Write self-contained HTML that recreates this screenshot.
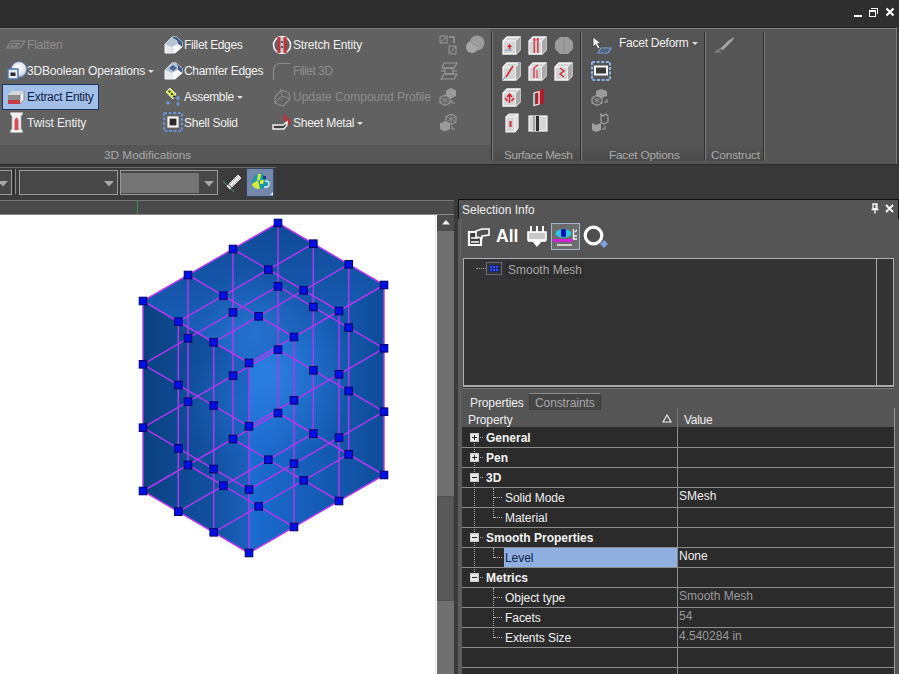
<!DOCTYPE html>
<html><head><meta charset="utf-8">
<style>
*{margin:0;padding:0;box-sizing:border-box}
html,body{width:899px;height:674px;overflow:hidden;background:#383838;font-family:"Liberation Sans",sans-serif;font-size:12px;color:#e6e6e6}
.a{position:absolute}
.t{position:absolute;white-space:nowrap;line-height:1}
#title{left:0;top:0;width:899px;height:27px;background:#2e2e2e}
#ribbon{left:0;top:27px;width:897px;height:137px;background:#555555;border-top:1px solid #242424;border-right:1px solid #7a7a7a}
.band{position:absolute;top:117px;height:16px;background:linear-gradient(#545454,#4b4b4b)}
.sep{position:absolute;top:4px;width:2px;height:128px;border-left:1px solid #2e2e2e;border-right:1px solid #7a7a7a}
.rl{font-size:12px;color:#f0f0f0}
.dis{color:#8e8e8e}
.plab{font-size:11.8px;color:#a9a9a9}
.arr{display:inline-block;width:0;height:0;border-left:3px solid transparent;border-right:3px solid transparent;border-top:3px solid #e0e0e0;vertical-align:middle;margin-left:3px}
</style></head><body>
<div id="title" class="a"></div>
<!-- window controls -->
<div class="a" style="left:854px;top:15px;width:8px;height:2px;background:#fff"></div>
<div class="a" style="left:871px;top:8px;width:7px;height:6px;border:1.5px solid #fff;border-bottom:none;border-left:none"></div>
<div class="a" style="left:869px;top:10px;width:7px;height:7px;border:1.5px solid #fff;border-top-width:2px"></div>
<svg class="a" style="left:885px;top:7px" width="10" height="10"><path d="M1.5 1.5L8.5 8.5M8.5 1.5L1.5 8.5" stroke="#fff" stroke-width="2.2"/></svg>

<div id="ribbon" class="a">
  <div class="a" style="left:0;top:1px;width:491px;height:117px;background:#616161"></div>
  <div class="a" style="left:0;top:117px;width:491px;height:19px;background:#565656"></div>
  <div class="band" style="left:494px;width:86px"></div>
  <div class="band" style="left:583px;width:121px"></div>
  <div class="band" style="left:707px;width:56px"></div>
  <div class="sep" style="left:491px"></div>
  <div class="sep" style="left:580px"></div>
  <div class="sep" style="left:704px"></div>
  <div class="sep" style="left:763px"></div>
  <div class="t plab" style="left:104px;top:122px">3D Modifications</div>
  <div class="t plab" style="left:504px;top:122px;letter-spacing:-0.35px">Surface Mesh</div>
  <div class="t plab" style="left:609px;top:122px;letter-spacing:-0.22px">Facet Options</div>
  <div class="t plab" style="left:711px;top:122px;letter-spacing:-0.17px">Construct</div>
</div>
<div class="a" style="left:0;top:28px;width:897px;height:1px;background:#808080"></div>
<!-- RIBBON ITEMS -->
<div class="a" style="left:2px;top:84px;width:97px;height:26px;background:#a2bfe8;border:1px solid #1d3460"></div>

<!-- ICONS col1 -->
<svg class="a" style="left:6px;top:40px" width="20" height="9"><path d="M5.5 1H19L14 8H1Z" fill="none" stroke="#8e8e8e" stroke-width="1.1"/><path d="M7 3.5H14L11 6.5H5Z" fill="none" stroke="#8e8e8e" stroke-width="0.9"/><path d="M11 3.5L9.5 6.5" stroke="#8e8e8e" stroke-width="0.9"/></svg>
<svg class="a" style="left:7px;top:61px" width="20" height="19"><defs><radialGradient id="bsph" cx="0.45" cy="0.4" r="0.6"><stop offset="0" stop-color="#ffffff"/><stop offset="0.7" stop-color="#dfe6ee"/><stop offset="1" stop-color="#9fb4cf"/></radialGradient></defs><circle cx="12" cy="8.5" r="7.8" fill="url(#bsph)" stroke="#5d7fb0" stroke-width="0.8"/><path d="M1 8H11V18H1Z" fill="#e9eef4" stroke="#4f73a8" stroke-width="1.4"/><rect x="3.5" y="11.5" width="5" height="3.5" fill="#2a2a2a"/></svg>
<svg class="a" style="left:7px;top:90px" width="19" height="15"><path d="M1 5H13V14H1Z" fill="#8a8a8a"/><path d="M1 10H13V14H1Z" fill="#c43c48"/><path d="M13 5L17 1V10L13 14Z" fill="#f0f0f0" stroke="#777" stroke-width="0.7"/><path d="M1 5L5 1H17L13 5Z" fill="#d8d8d8"/></svg>
<svg class="a" style="left:10px;top:112px" width="13" height="21"><path d="M0.5 0.5H12.5V2.5L11 4V17L12.5 18.5V20.5H0.5V18.5L2 17V4L0.5 2.5Z" fill="#efefef" stroke="#bbb" stroke-width="0.6"/><path d="M6.5 5L8.5 8V18H4.5V8Z" fill="#d0505c"/></svg>
<!-- col2 -->
<svg class="a" style="left:164px;top:35px" width="19" height="20"><path d="M1 9L8 2H13L18 7V12L11 18H1Z" fill="#e6eaee" stroke="#f8f8f8" stroke-width="1"/><path d="M8 2H13L18 7V12L14 9Q14 5 10 4Z" fill="#3f5d86"/><path d="M1 9L8 2L10 4Q14 5 14 9L8 12Z" fill="#b4c2d4"/><path d="M8 12L14 9L18 12L11 18Z" fill="#f6f8fa"/><path d="M1 9L8 12V18" fill="none" stroke="#c8ced6" stroke-width="0.8"/></svg>
<svg class="a" style="left:164px;top:61px" width="19" height="20"><path d="M1 9L8 2H12L18 7V12L11 18H1Z" fill="#e6eaee" stroke="#f8f8f8" stroke-width="1"/><path d="M12 2L18 7V12L14 9V6Z" fill="#3f5d86"/><path d="M1 9L8 2H12L14 6V9L8 12Z" fill="#b4c2d4"/><path d="M5 7L9 4L13 7L9 10Z" fill="#4a6690"/><path d="M8 12L14 9L18 12L11 18Z" fill="#f6f8fa"/></svg>
<svg class="a" style="left:163px;top:87px" width="20" height="20"><path d="M3 5L7 1L13 7L10 12Z" fill="#d6e84a" stroke="#f6f6f6" stroke-width="0.8"/><circle cx="6.5" cy="4.5" r="1.1" fill="#222"/><circle cx="9" cy="7" r="1.1" fill="#222"/><circle cx="11" cy="9.5" r="1.1" fill="#222"/><g fill="#7ea0d0"><circle cx="5" cy="16" r="1.8"/><circle cx="15" cy="11" r="1.8"/><circle cx="15" cy="17" r="1.5"/></g><path d="M15 9V19M13 17H17M3 16H8" stroke="#5a8ac8" stroke-width="0.8"/></svg>
<svg class="a" style="left:163px;top:112px" width="20" height="20"><rect x="1" y="1" width="18" height="18" fill="none" stroke="#8fb2e6" stroke-width="2.2" stroke-dasharray="3 1.6"/><rect x="1" y="1" width="18" height="18" fill="none" stroke="#2a4a80" stroke-width="0.6"/><rect x="5.5" y="5.5" width="9" height="9" fill="#2c2c2c" stroke="#f4f4f4" stroke-width="2.2"/></svg>
<!-- col3 -->
<svg class="a" style="left:271px;top:36px" width="22" height="18"><circle cx="11" cy="9" r="8.5" fill="none" stroke="#f2f2f2" stroke-width="1.6"/><rect x="6.5" y="1" width="3" height="16" fill="#c8303c"/><rect x="12.5" y="1" width="3" height="16" fill="#c8303c"/><rect x="9.5" y="1" width="3" height="16" fill="#c8ccd4"/><circle cx="11" cy="6" r="0.9" fill="#222"/><circle cx="11" cy="11" r="0.9" fill="#222"/></svg>
<svg class="a" style="left:272px;top:62px" width="20" height="19"><path d="M1.5 18V9Q1.5 2 8 1.5H18.5" fill="none" stroke="#8c8c8c" stroke-width="1.2"/></svg>
<svg class="a" style="left:272px;top:88px" width="20" height="19"><path d="M3 9L9 2L17 5L18 11L11 18L3 15Z" fill="none" stroke="#8a8a8a" stroke-width="1.3"/><path d="M9 2L10 8L18 11M10 8L3 15" fill="none" stroke="#8a8a8a" stroke-width="1"/><path d="M5 11L9 9V15" stroke="#7a7a7a" stroke-width="0.8" fill="none"/></svg>
<svg class="a" style="left:272px;top:112px" width="22" height="20"><path d="M12 1L20 10L16 14L11 7Z" fill="#b83440" opacity="0.85"/><path d="M1 13H11L15 10V13L12 17H1Z" fill="#404040" stroke="#f2f2f2" stroke-width="1.4"/></svg>
<!-- col4 small gray icons -->
<svg class="a" style="left:439px;top:35px" width="20" height="20"><rect x="1" y="1" width="7" height="7" fill="none" stroke="#9a9a9a" stroke-width="1"/><path d="M2 7L7 2" stroke="#9a9a9a"/><rect x="10" y="11" width="7" height="8" fill="none" stroke="#9a9a9a" stroke-width="1"/><path d="M11 18L16 12" stroke="#9a9a9a"/><path d="M10 2H15V8" fill="none" stroke="#9a9a9a" stroke-width="1.4"/></svg>
<svg class="a" style="left:465px;top:35px" width="21" height="19"><circle cx="12" cy="8" r="7.5" fill="#9c9c9c"/><circle cx="7" cy="12" r="6" fill="#a6a6a6"/><path d="M6 7L13 12" stroke="#777" stroke-width="0.8"/></svg>
<svg class="a" style="left:440px;top:62px" width="19" height="18"><path d="M4 1H17L14 6H2Z" fill="none" stroke="#9c9c9c" stroke-width="1.1"/><path d="M4 12H17L14 17H1Z" fill="none" stroke="#9c9c9c" stroke-width="1.1"/><rect x="5" y="6" width="8" height="6" fill="none" stroke="#9c9c9c" stroke-width="1"/><path d="M1 9H5M13 9H17" stroke="#9c9c9c"/></svg>
<svg class="a" style="left:439px;top:87px" width="20" height="20"><path d="M12 1L17 3.5V9L12 11.5L7 9V3.5Z" fill="#9a9a9a"/><path d="M6 8L11 10.5V16L6 18.5L1 16V10.5Z" fill="none" stroke="#9a9a9a" stroke-width="1.1"/><path d="M1 10.5L11 16M11 10.5L1 16M6 8V18.5" stroke="#9a9a9a" stroke-width="0.7"/><path d="M13 13V16H16" fill="none" stroke="#9a9a9a" stroke-width="1.1"/></svg>
<svg class="a" style="left:439px;top:113px" width="20" height="20"><path d="M12 1L17 3.5V9L12 11.5L7 9V3.5Z" fill="none" stroke="#9a9a9a" stroke-width="1.1"/><path d="M7 3.5L17 9M17 3.5L7 9M12 1V11.5" stroke="#9a9a9a" stroke-width="0.7"/><path d="M6 8L11 10.5V16L6 18.5L1 16V10.5Z" fill="#9a9a9a"/><path d="M13 13V16H16" fill="none" stroke="#9a9a9a" stroke-width="1.1"/></svg>

<div class="t rl dis" style="left:27px;top:39px;letter-spacing:-0.17px">Flatten</div>
<div class="t rl" style="left:27px;top:65px;letter-spacing:-0.17px">3DBoolean Operations<span class="arr"></span></div>
<div class="t rl" style="left:27px;top:91px;letter-spacing:-0.31px;color:#0e1f45">Extract Entity</div>
<div class="t rl" style="left:27px;top:117px;letter-spacing:-0.12px">Twist Entity</div>
<div class="t rl" style="left:184px;top:39px;letter-spacing:-0.36px">Fillet Edges</div>
<div class="t rl" style="left:184px;top:65px;letter-spacing:-0.33px">Chamfer Edges</div>
<div class="t rl" style="left:184px;top:91px;letter-spacing:-0.36px">Assemble<span class="arr"></span></div>
<div class="t rl" style="left:184px;top:117px;letter-spacing:-0.27px">Shell Solid</div>
<div class="t rl" style="left:293px;top:39px;letter-spacing:-0.17px">Stretch Entity</div>
<div class="t rl dis" style="left:293px;top:65px;letter-spacing:-0.49px">Fillet 3D</div>
<div class="t rl dis" style="left:293px;top:91px;letter-spacing:-0.01px">Update Compound Profile</div>
<div class="t rl" style="left:293px;top:117px;letter-spacing:-0.25px">Sheet Metal<span class="arr"></span></div>
<div class="t rl" style="left:619px;top:37px;letter-spacing:-0.26px">Facet Deform<span class="arr"></span></div>

<svg class="a" style="left:502px;top:36px" width="19" height="19"><path d="M1 5L5 1H18V14L14 18H1Z" fill="#d4d4d4" stroke="#f8f8f8" stroke-width="1.3"/><path d="M14 5V18M1 5H14L18 1" fill="none" stroke="#f8f8f8" stroke-width="1.2"/><path d="M14 5L18 1V14L14 18Z" fill="#a9a9a9"/><path d="M7.5 8L10 11H5Z" fill="#d02030"/><rect x="6.8" y="10" width="1.6" height="3" fill="#d02030"/><path d="M3 14L10 14" stroke="#8aa0c8" stroke-width="1.2"/></svg><svg class="a" style="left:528px;top:36px" width="19" height="19"><path d="M1 5L5 1H18V14L14 18H1Z" fill="#d4d4d4" stroke="#f8f8f8" stroke-width="1.3"/><path d="M14 5V18M1 5H14L18 1" fill="none" stroke="#f8f8f8" stroke-width="1.2"/><path d="M14 5L18 1V14L14 18Z" fill="#a9a9a9"/><rect x="5.5" y="2" width="1.6" height="15" fill="#d84050"/><rect x="9" y="2" width="1.6" height="15" fill="#d84050"/><path d="M5 4H11" stroke="#d84050"/></svg><svg class="a" style="left:554px;top:36px" width="20" height="19"><path d="M6 1H14L19 6V13L14 18H6L1 13V6Z" fill="#9c9c9c"/><path d="M10 2V17" stroke="#8a8a8a" stroke-width="1"/></svg><svg class="a" style="left:502px;top:62px" width="19" height="19"><path d="M1 5L5 1H18V14L14 18H1Z" fill="#d4d4d4" stroke="#f8f8f8" stroke-width="1.3"/><path d="M14 5V18M1 5H14L18 1" fill="none" stroke="#f8f8f8" stroke-width="1.2"/><path d="M14 5L18 1V14L14 18Z" fill="#a9a9a9"/><path d="M4 15L11 4" stroke="#d02838" stroke-width="1.6"/><path d="M1 18L3 15M16 2L18 1" stroke="#6a8cc0" stroke-width="1"/></svg><svg class="a" style="left:528px;top:62px" width="19" height="19"><path d="M1 5L5 1H18V14L14 18H1Z" fill="#d4d4d4" stroke="#f8f8f8" stroke-width="1.3"/><path d="M14 5V18M1 5H14L18 1" fill="none" stroke="#f8f8f8" stroke-width="1.2"/><path d="M14 5L18 1V14L14 18Z" fill="#a9a9a9"/><path d="M6 16V6L10 3" stroke="#d84050" stroke-width="1.5" fill="none"/><path d="M9 16V8" stroke="#d84050" stroke-width="1.2"/></svg><svg class="a" style="left:554px;top:62px" width="19" height="19"><path d="M1 5L5 1H18V14L14 18H1Z" fill="#d4d4d4" stroke="#f8f8f8" stroke-width="1.3"/><path d="M14 5V18M1 5H14L18 1" fill="none" stroke="#f8f8f8" stroke-width="1.2"/><path d="M14 5L18 1V14L14 18Z" fill="#a9a9a9"/><path d="M6 6L10 9L6 12L10 15" stroke="#d02838" stroke-width="1.4" fill="none"/></svg><svg class="a" style="left:502px;top:88px" width="19" height="19"><path d="M1 5L5 1H18V14L14 18H1Z" fill="#d4d4d4" stroke="#f8f8f8" stroke-width="1.3"/><path d="M14 5V18M1 5H14L18 1" fill="none" stroke="#f8f8f8" stroke-width="1.2"/><path d="M14 5L18 1V14L14 18Z" fill="#a9a9a9"/><path d="M5 9L7.5 6L10 9M7.5 6V15M3 10L5.5 13M12 10L9.5 13" stroke="#d02838" stroke-width="1.6" fill="none"/></svg><svg class="a" style="left:532px;top:88px" width="14" height="19"><path d="M4 3L12 1V15L4 18Z" fill="#b01c2a"/><path d="M2 5L7 3.5V16L2 17.5Z" fill="none" stroke="#f4f4f4" stroke-width="1.3"/></svg><svg class="a" style="left:505px;top:113px" width="14" height="20"><path d="M1 4L4 1H13V15L10 19H1Z" fill="#d4d4d4" stroke="#f8f8f8" stroke-width="1.2"/><path d="M10 4V19M1 4H10L13 1" fill="none" stroke="#f8f8f8" stroke-width="1.1"/><rect x="4.5" y="8" width="2" height="6" fill="#d02838"/></svg><svg class="a" style="left:528px;top:115px" width="20" height="17"><rect x="1" y="1" width="18" height="15" fill="#d6d6d6" stroke="#f6f6f6" stroke-width="1.2"/><rect x="8" y="1" width="3" height="15" fill="#303030"/><rect x="5" y="1" width="2" height="15" fill="#a4a4a4"/></svg><svg class="a" style="left:592px;top:36px" width="20" height="19"><path d="M1 1V11L3.5 8.5L6 13L8 12L5.5 7.5H9Z" fill="#f4f4f4" stroke="#222" stroke-width="0.6"/><path d="M6 17H16L19 12H9Z" fill="none" stroke="#7aa0d8" stroke-width="1.2"/><path d="M8 16L14 13M11 17L17 13" stroke="#4a78c0" stroke-width="0.9"/></svg><svg class="a" style="left:591px;top:61px" width="20" height="20"><rect x="1" y="1" width="18" height="18" fill="none" stroke="#8fb2e6" stroke-width="2.2" stroke-dasharray="3 1.6"/><rect x="4" y="5.5" width="12" height="8" fill="#3a3a3a" stroke="#f4f4f4" stroke-width="2"/></svg><svg class="a" style="left:591px;top:88px" width="20" height="19"><path d="M10 1L16 3V8L10 10L5 8V3Z" fill="#9a9a9a"/><path d="M6 7L11 9.5V15L6 17.5L1 15V9.5Z" fill="none" stroke="#a4a4a4" stroke-width="1.1"/><path d="M1 9.5L11 15M11 9.5L1 15M6 7V17.5" stroke="#a4a4a4" stroke-width="0.7"/><path d="M16 11V14H13" fill="none" stroke="#a4a4a4" stroke-width="1.1"/></svg><svg class="a" style="left:591px;top:113px" width="20" height="20"><path d="M10 1L12 3L15 1L17 3V9L13 11L10 9Z" fill="none" stroke="#a4a4a4" stroke-width="1.1"/><path d="M1 10L5 12L10 10V17L5 19L1 17Z" fill="#a0a0a0"/><path d="M14 13V16H11" fill="none" stroke="#a4a4a4" stroke-width="1.1"/></svg><svg class="a" style="left:714px;top:35px" width="22" height="19"><path d="M20 2L14 6L8 12L6 14L9 15L15 9L19 5Z" fill="#a6a6a6"/><path d="M6 14L2 17H7" stroke="#8c8c8c" stroke-width="1.2" fill="none"/></svg>
<!-- toolbar -->
<div class="a" style="left:0;top:164px;width:899px;height:1px;background:#2a2a2a"></div>
<div class="a" style="left:0;top:167px;width:276px;height:33px;background:#3c3c3c;border-top:1px solid #6a6a6a"></div>
<div class="a" style="left:-2px;top:170px;width:14px;height:25px;border:1px solid #9a9a9a;background:#474747"></div>
<div class="a" style="left:19px;top:170px;width:99px;height:25px;border:1px solid #9a9a9a;background:#474747"></div>
<div class="a" style="left:120px;top:170px;width:98px;height:25px;border:1px solid #9a9a9a;background:#474747"></div>
<div class="a" style="left:121px;top:173px;width:78px;height:20px;background:#747474"></div>


<svg class="a" style="left:-2px;top:181px" width="10" height="6"><path d="M0 0H10L5 5.5Z" fill="#a8a8a8"/></svg>
<svg class="a" style="left:104px;top:181px" width="10" height="6"><path d="M0 0H10L5 5.5Z" fill="#a8a8a8"/></svg>
<svg class="a" style="left:204px;top:181px" width="10" height="6"><path d="M0 0H10L5 5.5Z" fill="#a8a8a8"/></svg>
<svg class="a" style="left:221px;top:172px" width="22" height="22"><path d="M2 9L13 20" stroke="#4a7a5a" stroke-width="1.3"/><path d="M17 2L21 6L11 16L7 12Z" fill="#e8e8e8" stroke="#222" stroke-width="0.8"/><path d="M9 12L17 4M11 14L19 6" stroke="#777" stroke-width="0.8" stroke-dasharray="1 1"/><path d="M7 12L11 16L9 18L5 14Z" fill="#ddd" stroke="#222" stroke-width="0.6"/></svg>
<div class="a" style="left:246px;top:168px;width:28px;height:29px;background:#7388aa;border:1px solid #34445c"></div>
<svg class="a" style="left:248px;top:170px" width="26" height="26"><path d="M5 9Q6 4 12 4Q17 4 18 9Q22 10 21 14Q19 19 12 19Q5 19 4 15Q3 11 5 9Z" fill="#1a9aa8"/><path d="M4 14L10 10L12 19Q6 19 4 15Z" fill="#d8ea3a"/><path d="M10 4L13 4L12 10L9 10Z" fill="#d8ea3a"/><path d="M12 10H16L15 14H12Z" fill="#d8ea3a"/><path d="M15 6H18V9H15Z" fill="#1a3a90"/><path d="M17 11Q22 11 21 15Q20 18 16 17" fill="none" stroke="#e8f0ff" stroke-width="1.4"/><path d="M22 25H25V22Z" fill="#f0f0f0"/></svg>

<!-- viewport header -->
<div class="a" style="left:0;top:200px;width:455px;height:15px;background:#4a4a4a;border-top:1px solid #777;border-bottom:1px solid #8a8a8a"></div>
<div class="a" style="left:0;top:215px;width:437px;height:459px;background:#fff"></div>
<div class="a" style="left:137px;top:201px;width:1px;height:13px;background:#3f8a5a"></div>
<div class="a" style="left:13px;top:169px;width:3px;height:25px;border-left:1px solid #222;border-right:1px solid #8a8a8a"></div>
<svg width="437" height="459" viewBox="0 215 437 459" style="position:absolute;left:0;top:215px">
<defs>
<linearGradient id="gl" x1="0" y1="0" x2="1" y2="0"><stop offset="0" stop-color="#0a4080"/><stop offset="0.6" stop-color="#114f9e"/><stop offset="1" stop-color="#1a60bc"/></linearGradient>
<linearGradient id="gr" x1="0" y1="0" x2="1" y2="0"><stop offset="0" stop-color="#1c6cd2"/><stop offset="1" stop-color="#0e4c9a"/></linearGradient>
<linearGradient id="gt" x1="0.5" y1="0" x2="0.5" y2="1"><stop offset="0" stop-color="#0f4a96"/><stop offset="1" stop-color="#1c64c2"/></linearGradient>
<radialGradient id="hlr" cx="272" cy="375" r="85" gradientUnits="userSpaceOnUse"><stop offset="0" stop-color="#3a92f4" stop-opacity="0.55"/><stop offset="1" stop-color="#3a92f4" stop-opacity="0"/></radialGradient>
<radialGradient id="hlt" cx="255" cy="330" r="60" gradientUnits="userSpaceOnUse"><stop offset="0" stop-color="#3a8ef0" stop-opacity="0.4"/><stop offset="1" stop-color="#3a8ef0" stop-opacity="0"/></radialGradient>
<radialGradient id="hll" cx="235" cy="400" r="60" gradientUnits="userSpaceOnUse"><stop offset="0" stop-color="#2a7ce0" stop-opacity="0.3"/><stop offset="1" stop-color="#2a7ce0" stop-opacity="0"/></radialGradient>
</defs>
<polygon points="249.0,553.0 143.0,491.0 143.0,301.0 249.0,363.0" fill="url(#gl)"/>
<polygon points="249.0,553.0 143.0,491.0 143.0,301.0 249.0,363.0" fill="url(#hll)"/>
<polygon points="249.0,553.0 249.0,363.0 384.0,285.0 384.0,475.0" fill="url(#gr)"/>
<polygon points="249.0,553.0 249.0,363.0 384.0,285.0 384.0,475.0" fill="url(#hlr)"/>
<polygon points="249.0,363.0 143.0,301.0 278.0,223.0 384.0,285.0" fill="url(#gt)"/>
<polygon points="249.0,363.0 143.0,301.0 278.0,223.0 384.0,285.0" fill="url(#hlt)"/>
<g stroke="#b038ee" stroke-width="1.45" fill="none">
<line x1="249.0" y1="553.0" x2="384.0" y2="475.0"/>
<line x1="249.0" y1="489.7" x2="384.0" y2="411.7"/>
<line x1="249.0" y1="426.3" x2="384.0" y2="348.3"/>
<line x1="249.0" y1="363.0" x2="384.0" y2="285.0"/>
<line x1="249.0" y1="553.0" x2="249.0" y2="363.0"/>
<line x1="294.0" y1="527.0" x2="294.0" y2="337.0"/>
<line x1="339.0" y1="501.0" x2="339.0" y2="311.0"/>
<line x1="384.0" y1="475.0" x2="384.0" y2="285.0"/>
<line x1="143.0" y1="491.0" x2="278.0" y2="413.0"/>
<line x1="143.0" y1="427.7" x2="278.0" y2="349.7"/>
<line x1="143.0" y1="364.3" x2="278.0" y2="286.3"/>
<line x1="143.0" y1="301.0" x2="278.0" y2="223.0"/>
<line x1="143.0" y1="491.0" x2="143.0" y2="301.0"/>
<line x1="188.0" y1="465.0" x2="188.0" y2="275.0"/>
<line x1="233.0" y1="439.0" x2="233.0" y2="249.0"/>
<line x1="278.0" y1="413.0" x2="278.0" y2="223.0"/>
<line x1="249.0" y1="553.0" x2="143.0" y2="491.0"/>
<line x1="249.0" y1="489.7" x2="143.0" y2="427.7"/>
<line x1="249.0" y1="426.3" x2="143.0" y2="364.3"/>
<line x1="249.0" y1="363.0" x2="143.0" y2="301.0"/>
<line x1="213.7" y1="532.3" x2="213.7" y2="342.3"/>
<line x1="178.3" y1="511.7" x2="178.3" y2="321.7"/>
<line x1="384.0" y1="475.0" x2="278.0" y2="413.0"/>
<line x1="384.0" y1="411.7" x2="278.0" y2="349.7"/>
<line x1="384.0" y1="348.3" x2="278.0" y2="286.3"/>
<line x1="384.0" y1="285.0" x2="278.0" y2="223.0"/>
<line x1="348.7" y1="454.3" x2="348.7" y2="264.3"/>
<line x1="313.3" y1="433.7" x2="313.3" y2="243.7"/>
<line x1="213.7" y1="532.3" x2="348.7" y2="454.3"/>
<line x1="178.3" y1="511.7" x2="313.3" y2="433.7"/>
<line x1="294.0" y1="527.0" x2="188.0" y2="465.0"/>
<line x1="339.0" y1="501.0" x2="233.0" y2="439.0"/>
<line x1="213.7" y1="342.3" x2="348.7" y2="264.3"/>
<line x1="178.3" y1="321.7" x2="313.3" y2="243.7"/>
<line x1="294.0" y1="337.0" x2="188.0" y2="275.0"/>
<line x1="339.0" y1="311.0" x2="233.0" y2="249.0"/>
</g>
<g fill="#0010e4" stroke="#000068" stroke-width="1">
<rect x="245.2" y="549.2" width="7.6" height="7.6"/>
<rect x="245.2" y="485.9" width="7.6" height="7.6"/>
<rect x="245.2" y="422.5" width="7.6" height="7.6"/>
<rect x="245.2" y="359.2" width="7.6" height="7.6"/>
<rect x="290.2" y="523.2" width="7.6" height="7.6"/>
<rect x="290.2" y="459.9" width="7.6" height="7.6"/>
<rect x="290.2" y="396.5" width="7.6" height="7.6"/>
<rect x="290.2" y="333.2" width="7.6" height="7.6"/>
<rect x="335.2" y="497.2" width="7.6" height="7.6"/>
<rect x="335.2" y="433.9" width="7.6" height="7.6"/>
<rect x="335.2" y="370.5" width="7.6" height="7.6"/>
<rect x="335.2" y="307.2" width="7.6" height="7.6"/>
<rect x="380.2" y="471.2" width="7.6" height="7.6"/>
<rect x="380.2" y="407.9" width="7.6" height="7.6"/>
<rect x="380.2" y="344.5" width="7.6" height="7.6"/>
<rect x="380.2" y="281.2" width="7.6" height="7.6"/>
<rect x="209.9" y="528.5" width="7.6" height="7.6"/>
<rect x="209.9" y="465.2" width="7.6" height="7.6"/>
<rect x="209.9" y="401.9" width="7.6" height="7.6"/>
<rect x="209.9" y="338.5" width="7.6" height="7.6"/>
<rect x="254.9" y="502.5" width="7.6" height="7.6"/>
<rect x="254.9" y="312.5" width="7.6" height="7.6"/>
<rect x="299.9" y="476.5" width="7.6" height="7.6"/>
<rect x="299.9" y="286.5" width="7.6" height="7.6"/>
<rect x="344.9" y="450.5" width="7.6" height="7.6"/>
<rect x="344.9" y="387.2" width="7.6" height="7.6"/>
<rect x="344.9" y="323.9" width="7.6" height="7.6"/>
<rect x="344.9" y="260.5" width="7.6" height="7.6"/>
<rect x="174.5" y="507.9" width="7.6" height="7.6"/>
<rect x="174.5" y="444.5" width="7.6" height="7.6"/>
<rect x="174.5" y="381.2" width="7.6" height="7.6"/>
<rect x="174.5" y="317.9" width="7.6" height="7.6"/>
<rect x="219.5" y="481.9" width="7.6" height="7.6"/>
<rect x="219.5" y="291.9" width="7.6" height="7.6"/>
<rect x="264.5" y="455.9" width="7.6" height="7.6"/>
<rect x="264.5" y="265.9" width="7.6" height="7.6"/>
<rect x="309.5" y="429.9" width="7.6" height="7.6"/>
<rect x="309.5" y="366.5" width="7.6" height="7.6"/>
<rect x="309.5" y="303.2" width="7.6" height="7.6"/>
<rect x="309.5" y="239.9" width="7.6" height="7.6"/>
<rect x="139.2" y="487.2" width="7.6" height="7.6"/>
<rect x="139.2" y="423.9" width="7.6" height="7.6"/>
<rect x="139.2" y="360.5" width="7.6" height="7.6"/>
<rect x="139.2" y="297.2" width="7.6" height="7.6"/>
<rect x="184.2" y="461.2" width="7.6" height="7.6"/>
<rect x="184.2" y="397.9" width="7.6" height="7.6"/>
<rect x="184.2" y="334.5" width="7.6" height="7.6"/>
<rect x="184.2" y="271.2" width="7.6" height="7.6"/>
<rect x="229.2" y="435.2" width="7.6" height="7.6"/>
<rect x="229.2" y="371.9" width="7.6" height="7.6"/>
<rect x="229.2" y="308.5" width="7.6" height="7.6"/>
<rect x="229.2" y="245.2" width="7.6" height="7.6"/>
<rect x="274.2" y="409.2" width="7.6" height="7.6"/>
<rect x="274.2" y="345.9" width="7.6" height="7.6"/>
<rect x="274.2" y="282.5" width="7.6" height="7.6"/>
<rect x="274.2" y="219.2" width="7.6" height="7.6"/>
</g></svg>
<!-- scrollbar -->
<div class="a" style="left:435px;top:215px;width:1px;height:459px;background:#e6e6e6"></div>
<div class="a" style="left:437px;top:215px;width:17px;height:459px;background:#707070"></div>
<div class="a" style="left:454px;top:199px;width:4px;height:475px;background:#3a3a3a"></div>
<div class="a" style="left:437px;top:215px;width:17px;height:16px;background:#4d4d4d"></div>
<svg class="a" style="left:442px;top:220px" width="8" height="5"><path d="M4 0L8 4.5H0Z" fill="#f0f0f0"/></svg>
<div class="a" style="left:437px;top:496px;width:17px;height:105px;background:#595959;border:1px solid #505050"></div>

<!-- selection info panel -->
<div class="a" style="left:458px;top:199px;width:441px;height:475px;background:#555;border-top:1px solid #111"></div>
<div class="a" style="left:898px;top:199px;width:1px;height:20px;background:#111"></div>
<div class="a" style="left:458px;top:199px;width:1px;height:20px;background:#111"></div>
<div class="t" style="left:462px;top:204px;font-size:12px;color:#ececec">Selection Info</div>
<svg class="a" style="left:871px;top:203px" width="8" height="11"><path d="M2 1H6V6H2Z" fill="none" stroke="#fff" stroke-width="1.3"/><path d="M0.5 6.5H7.5M4 6.5V10.5" stroke="#fff" stroke-width="1.3"/><path d="M5 1V6" stroke="#fff" stroke-width="1"/></svg>
<svg class="a" style="left:885px;top:204px" width="9" height="9"><path d="M1 1L8 8M8 1L1 8" stroke="#fff" stroke-width="1.8"/></svg>
<svg class="a" style="left:467px;top:227px" width="24" height="20"><path d="M2 5H14V18H2Z" fill="#3c3c3c" stroke="#fff" stroke-width="2.2"/><path d="M9 4L15 2H22V8L15 9V11L9 10Z" fill="#505050" stroke="#fff" stroke-width="1.6"/><path d="M4 11H11M4 15H12" stroke="#fff" stroke-width="1.5"/></svg>
<div class="t" style="left:496px;top:228px;font-size:17.5px;font-weight:bold;color:#fff">All</div>
<svg class="a" style="left:527px;top:226px" width="20" height="22"><path d="M4 0V7M10 0V7M16 0V7" stroke="#fff" stroke-width="2"/><rect x="1" y="6" width="18" height="8" fill="#c8c8c8" stroke="#fff" stroke-width="1.6"/><path d="M1 15H19" stroke="#fff" stroke-width="1.6"/><path d="M5 15H15L10 21Z" fill="#fff"/></svg>
<div class="a" style="left:551px;top:223px;width:29px;height:27px;background:#6c6c6c;border:1px solid #a4b4cc"></div>
<svg class="a" style="left:553px;top:226px" width="26" height="22"><ellipse cx="10.5" cy="7.5" rx="8" ry="4.2" fill="#28c8e8"/><rect x="8" y="3" width="5" height="8" rx="1.5" fill="#0a10b0"/><rect x="0" y="13" width="20" height="3" fill="#d020d8"/><path d="M4 19H19" stroke="#f2f2f2" stroke-width="1.5"/><path d="M20.5 3V14M20.5 10H24M20.5 13H24M22 6L24 4" stroke="#f2f2f2" stroke-width="1.3"/></svg>
<svg class="a" style="left:582px;top:225px" width="27" height="24"><circle cx="11.5" cy="10.5" r="8.3" fill="#4e4e4e" stroke="#fff" stroke-width="3.2"/><path d="M22 15L26 19L22 23L18 19Z" fill="#7ea2dc"/></svg>
<div class="a" style="left:463px;top:258px;width:431px;height:129px;background:#333;border:1px solid #b0b0b0;border-bottom:2px solid #a8a8a8"></div>
<div class="a" style="left:463px;top:387px;width:431px;height:1px;background:#333"></div>
<div class="a" style="left:463px;top:388px;width:431px;height:1px;background:#777"></div>
<div class="a" style="left:876px;top:259px;width:1px;height:126px;background:#a8a8a8"></div>
<div class="a" style="left:476px;top:268px;width:10px;height:1px;border-top:1px dotted #9a9a9a"></div>
<div class="a" style="left:505px;top:261px;width:79px;height:17px;background:#2e2e2e"></div>
<svg class="a" style="left:486px;top:262px" width="16" height="13"><rect x="0.5" y="0.5" width="15" height="12" fill="none" stroke="#9aa4c0" stroke-width="1" stroke-dasharray="1 1"/><rect x="3" y="3" width="10" height="7" fill="#1a2470"/><g fill="#3050ff"><rect x="4" y="4" width="2" height="2"/><rect x="7" y="4" width="2" height="2"/><rect x="10" y="4" width="2" height="2"/><rect x="4" y="7" width="2" height="2"/><rect x="7" y="7" width="2" height="2"/><rect x="10" y="7" width="2" height="2"/></g></svg>
<div class="t" style="left:508px;top:264px;font-size:12px;color:#a8a8a8">Smooth Mesh</div>
<div class="a" style="left:529px;top:393px;width:72px;height:17px;background:#454545;border-top:1px solid #8a8a8a;border-left:1px solid #3a3a3a;border-right:1px solid #3a3a3a"></div>
<div class="t" style="left:470px;top:397px;font-size:12px;letter-spacing:-0.1px;color:#f0f0f0">Properties</div>
<div class="t" style="left:535px;top:397px;font-size:12px;letter-spacing:-0.1px;color:#a8a8a8">Constraints</div>
<div class="t" style="left:468px;top:414px;font-size:12px;letter-spacing:-0.1px;color:#f0f0f0">Property</div>
<div class="t" style="left:684px;top:414px;font-size:12px;letter-spacing:-0.3px;color:#f0f0f0">Value</div>
<svg class="a" style="left:662px;top:414px" width="10" height="9"><path d="M5 1L9 8H1Z" fill="none" stroke="#f0f0f0" stroke-width="1.1"/></svg>
<div class="a" style="left:677px;top:408px;width:1px;height:19px;background:#7a7a7a"></div>
<div class="a" style="left:462px;top:427px;width:432px;height:247px;background:#2b2b2b"></div>
<div class="a" style="left:894px;top:408px;width:1px;height:266px;background:#9a9a9a"></div>
<div class="a" style="left:458px;top:219px;width:4px;height:455px;background:#5c5c5c"></div>
<div class="a" style="left:462px;top:447px;width:432px;height:1px;background:#8c8c8c"></div>
<div class="a" style="left:462px;top:467px;width:432px;height:1px;background:#8c8c8c"></div>
<div class="a" style="left:462px;top:487px;width:432px;height:1px;background:#8c8c8c"></div>
<div class="a" style="left:462px;top:507px;width:432px;height:1px;background:#8c8c8c"></div>
<div class="a" style="left:462px;top:527px;width:432px;height:1px;background:#8c8c8c"></div>
<div class="a" style="left:462px;top:547px;width:432px;height:1px;background:#8c8c8c"></div>
<div class="a" style="left:462px;top:567px;width:432px;height:1px;background:#8c8c8c"></div>
<div class="a" style="left:462px;top:587px;width:432px;height:1px;background:#8c8c8c"></div>
<div class="a" style="left:462px;top:607px;width:432px;height:1px;background:#8c8c8c"></div>
<div class="a" style="left:462px;top:627px;width:432px;height:1px;background:#8c8c8c"></div>
<div class="a" style="left:462px;top:647px;width:432px;height:1px;background:#8c8c8c"></div>
<div class="a" style="left:462px;top:667px;width:432px;height:1px;background:#8c8c8c"></div>
<div class="a" style="left:677px;top:427px;width:1px;height:247px;background:#8c8c8c"></div>
<div class="a" style="left:504px;top:548px;width:173px;height:19px;background:#8fb0e0"></div>
<div class="a" style="left:474px;top:440px;width:1px;height:142px;border-left:1px dotted #b0b0b0"></div>
<div class="a" style="left:493px;top:488px;width:1px;height:30px;border-left:1px dotted #b0b0b0"></div>
<div class="a" style="left:493px;top:588px;width:1px;height:50px;border-left:1px dotted #b0b0b0"></div>
<div class="a" style="left:493px;top:548px;width:1px;height:10px;border-left:1px dotted #b0b0b0"></div>
<div class="a" style="left:475px;top:437px;width:8px;height:1px;border-top:1px dotted #b0b0b0"></div>
<div class="a" style="left:470px;top:433px;width:9px;height:9px;background:#e8e8e8;border:1px solid #c8c8c8"></div>
<div class="a" style="left:472px;top:437px;width:5px;height:1px;background:#222"></div>
<div class="a" style="left:474px;top:435px;width:1px;height:5px;background:#222"></div>
<div class="t" style="left:486px;top:432px;font-size:12px;letter-spacing:0px;font-weight:bold;color:#f4f4f4">General</div>
<div class="a" style="left:475px;top:457px;width:8px;height:1px;border-top:1px dotted #b0b0b0"></div>
<div class="a" style="left:470px;top:453px;width:9px;height:9px;background:#e8e8e8;border:1px solid #c8c8c8"></div>
<div class="a" style="left:472px;top:457px;width:5px;height:1px;background:#222"></div>
<div class="a" style="left:474px;top:455px;width:1px;height:5px;background:#222"></div>
<div class="t" style="left:486px;top:452px;font-size:12px;letter-spacing:0px;font-weight:bold;color:#f4f4f4">Pen</div>
<div class="a" style="left:475px;top:477px;width:8px;height:1px;border-top:1px dotted #b0b0b0"></div>
<div class="a" style="left:470px;top:473px;width:9px;height:9px;background:#e8e8e8;border:1px solid #c8c8c8"></div>
<div class="a" style="left:472px;top:477px;width:5px;height:1px;background:#222"></div>
<div class="t" style="left:486px;top:472px;font-size:12px;letter-spacing:0px;font-weight:bold;color:#f4f4f4">3D</div>
<div class="a" style="left:494px;top:497px;width:8px;height:1px;border-top:1px dotted #b0b0b0"></div>
<div class="t" style="left:505px;top:492px;font-size:12px;letter-spacing:-0.05px;color:#f0f0f0">Solid Mode</div>
<div class="t" style="left:679px;top:490px;font-size:12px;color:#f0f0f0">SMesh</div>
<div class="a" style="left:494px;top:517px;width:8px;height:1px;border-top:1px dotted #b0b0b0"></div>
<div class="t" style="left:505px;top:512px;font-size:12px;letter-spacing:-0.05px;color:#f0f0f0">Material</div>
<div class="a" style="left:475px;top:537px;width:8px;height:1px;border-top:1px dotted #b0b0b0"></div>
<div class="a" style="left:470px;top:533px;width:9px;height:9px;background:#e8e8e8;border:1px solid #c8c8c8"></div>
<div class="a" style="left:472px;top:537px;width:5px;height:1px;background:#222"></div>
<div class="t" style="left:486px;top:532px;font-size:12px;letter-spacing:0px;font-weight:bold;color:#f4f4f4">Smooth Properties</div>
<div class="a" style="left:494px;top:557px;width:8px;height:1px;border-top:1px dotted #b0b0b0"></div>
<div class="t" style="left:505px;top:552px;font-size:12px;letter-spacing:-0.05px;color:#0e1f48">Level</div>
<div class="t" style="left:679px;top:550px;font-size:12px;color:#f0f0f0">None</div>
<div class="a" style="left:475px;top:577px;width:8px;height:1px;border-top:1px dotted #b0b0b0"></div>
<div class="a" style="left:470px;top:573px;width:9px;height:9px;background:#e8e8e8;border:1px solid #c8c8c8"></div>
<div class="a" style="left:472px;top:577px;width:5px;height:1px;background:#222"></div>
<div class="t" style="left:486px;top:572px;font-size:12px;letter-spacing:0px;font-weight:bold;color:#f4f4f4">Metrics</div>
<div class="a" style="left:494px;top:597px;width:8px;height:1px;border-top:1px dotted #b0b0b0"></div>
<div class="t" style="left:505px;top:592px;font-size:12px;letter-spacing:-0.05px;color:#f0f0f0">Object type</div>
<div class="t" style="left:679px;top:590px;font-size:12px;color:#9a9a9a">Smooth Mesh</div>
<div class="a" style="left:494px;top:617px;width:8px;height:1px;border-top:1px dotted #b0b0b0"></div>
<div class="t" style="left:505px;top:612px;font-size:12px;letter-spacing:-0.05px;color:#f0f0f0">Facets</div>
<div class="t" style="left:679px;top:610px;font-size:12px;color:#9a9a9a">54</div>
<div class="a" style="left:494px;top:637px;width:8px;height:1px;border-top:1px dotted #b0b0b0"></div>
<div class="t" style="left:505px;top:632px;font-size:12px;letter-spacing:-0.05px;color:#f0f0f0">Extents Size</div>
<div class="t" style="left:679px;top:630px;font-size:12px;color:#9a9a9a">4.540284 in</div>
</body></html>
